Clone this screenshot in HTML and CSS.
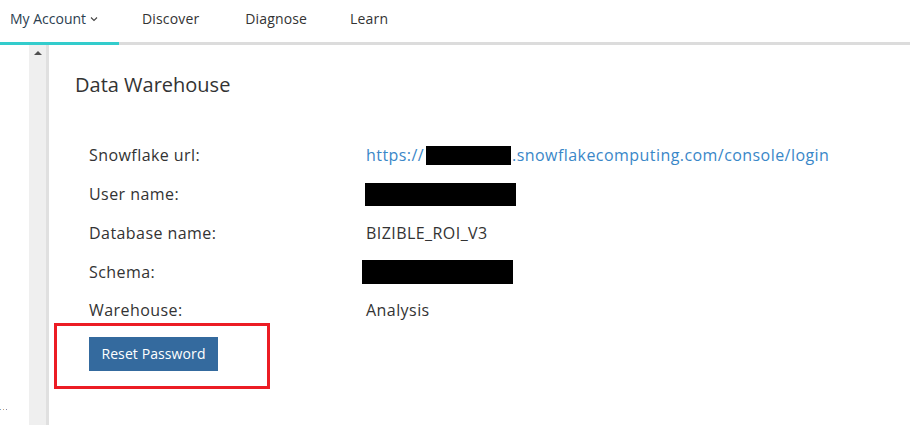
FILE: index.html
```html
<!DOCTYPE html>
<html>
<head>
<meta charset="utf-8">
<link rel="stylesheet" href="styles.css">
</head>
<body>
<nav class="topnav">
  <a class="nav-link active">My Account <svg class="chev" width="8" height="6" viewBox="0 0 8 6"><path d="M1 1.5 L4 4.5 L7 1.5" fill="none" stroke="#444" stroke-width="1.1"/></svg></a>
  <a class="nav-link">Discover</a>
  <a class="nav-link">Diagnose</a>
  <a class="nav-link">Learn</a>
</nav>
<div class="main">
  <div class="left">
    <div class="dots"><span class="d d1"></span><span class="d d2"></span><span class="d d3"></span></div>
  </div>
  <div class="gutter"><span class="arrow"></span></div>
  <section class="panel">
    <h1 class="title">Data Warehouse</h1>
    <div class="rows">
      <div class="row"><span class="label">Snowflake url:</span><span class="value link">https://<span class="redact r-url"></span>.snowflakecomputing.com/console/login</span></div>
      <div class="row"><span class="label">User name:</span><span class="value"><span class="redact r-user"></span></span></div>
      <div class="row"><span class="label">Database name:</span><span class="value">BIZIBLE_ROI_V3</span></div>
      <div class="row"><span class="label">Schema:</span><span class="value"><span class="redact r-schema"></span></span></div>
      <div class="row"><span class="label">Warehouse:</span><span class="value">Analysis</span></div>
    </div>
    <div class="highlight">
      <button class="btn">Reset Password</button>
    </div>
  </section>
</div>
</body>
</html>
```
FILE: styles.css
```css
html, body {
  margin: 0;
  padding: 0;
  background: #fff;
  font-family: "Open Sans", "Noto Sans", sans-serif;
  color: #333;
  overflow: hidden;
}
.topnav {
  display: flex;
  height: 42px;
  border-bottom: 3px solid #dcdcdc;
  position: relative;
}
.nav-link {
  display: flex;
  align-items: center;
  padding: 0 23px;
  font-size: 14px;
  letter-spacing: 0.15px;
  color: #333;
  position: relative;
  margin-top: -6px;
  height: 48px;
}
.nav-link:nth-child(4) {
  padding-left: 20px;
}
.nav-link.active {
  padding: 0 0 0 10px;
  width: 109px;
  color: #2c3e50;
  letter-spacing: 0;
}
.nav-link.active::after {
  content: "";
  position: absolute;
  left: 0;
  right: 0;
  bottom: -3px;
  height: 3px;
  background: #33cccc;
}
.chev {
  margin-left: 4px;
  margin-top: 2px;
}
.main {
  display: flex;
  height: 380px;
}
.left {
  width: 29px;
  position: relative;
}
.dots {
  position: absolute;
  left: 0;
  top: 364px;
  display: flex;
  gap: 2px;
}
.d {
  width: 1px;
  height: 1px;
  display: block;
}
.d1 { background: #7fa7c9; }
.d2 { background: #c9a57f; }
.d3 { background: #8a8aa8; }
.gutter {
  width: 17px;
  background: #efefef;
  border-right: 3px solid #e0e0e0;
  display: flex;
  justify-content: center;
  align-items: flex-start;
}
.arrow {
  margin-top: 6px;
  width: 0;
  height: 0;
  border-left: 4px solid transparent;
  border-right: 4px solid transparent;
  border-bottom: 4px solid #505050;
}
.panel {
  flex: 1;
  padding: 28px 0 0 26px;
}
.title {
  margin: 0;
  font-size: 20px;
  font-weight: 400;
  line-height: 24px;
  color: #333;
}
.rows {
  margin-top: 39px;
  padding-left: 14px;
}
.row {
  display: flex;
  align-items: center;
  height: 38.75px;
  font-size: 16px;
  letter-spacing: 0.44px;
}
.label {
  width: 277px;
}
.value {
  display: flex;
  align-items: center;
}
.link {
  color: #3a87c8;
}
.redact {
  display: inline-block;
  background: #000;
}
.r-url {
  width: 85px;
  height: 19px;
  margin: 0 1px 0 2px;
}
.r-user {
  width: 151px;
  height: 23px;
  margin-left: -1px;
}
.r-schema {
  width: 151px;
  height: 24px;
  margin-left: -4px;
}
.highlight {
  margin: -7px 0 0 -21px;
  border: 3px solid #ec1c24;
  padding: 11px 0 15px 32px;
  box-sizing: content-box;
  width: 178px;
}
.btn {
  display: block;
  width: 129px;
  height: 34px;
  background: #346a9e;
  color: #fff;
  border: none;
  font-family: "Open Sans", "Noto Sans", sans-serif;
  font-size: 14px;
  letter-spacing: 0.1px;
  padding: 0;
}
```
